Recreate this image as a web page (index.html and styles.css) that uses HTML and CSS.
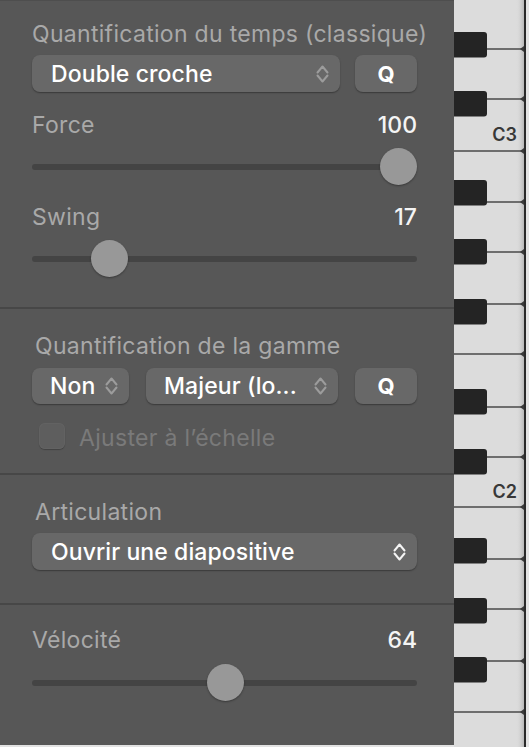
FILE: index.html
```html
<!DOCTYPE html>
<html lang="fr">
<head>
<meta charset="utf-8">
<title>Quantification</title>
<link rel="stylesheet" href="styles.css">
</head>
<body>
<div class="app">
  <div class="panel">
    <section class="section s1">
      <div class="title">Quantification du temps (classique)</div>
      <div class="row controls">
        <div class="popup grow">
          <span class="popup-text">Double croche</span>
          <svg class="chev" width="13" height="20" viewBox="0 0 13 20"><path d="M1.5 8.5 L6.5 2.5 L11.5 8.5 M1.5 11.5 L6.5 17.5 L11.5 11.5"/></svg>
        </div>
        <div class="btn">Q</div>
      </div>
      <div class="row label-row first-label">
        <span class="label">Force</span><span class="value">100</span>
      </div>
      <div class="slider"><div class="track"></div><div class="knob" style="left: calc((100% - 37px) * 1)"></div></div>
      <div class="row label-row">
        <span class="label">Swing</span><span class="value">17</span>
      </div>
      <div class="slider"><div class="track"></div><div class="knob" style="left: calc((100% - 37px) * 0.17)"></div></div>
    </section>
    <section class="section s2">
      <div class="title">Quantification de la gamme</div>
      <div class="row controls">
        <div class="popup small">
          <span class="popup-text">Non</span>
          <svg class="chev" width="13" height="20" viewBox="0 0 13 20"><path d="M1.5 8.5 L6.5 2.5 L11.5 8.5 M1.5 11.5 L6.5 17.5 L11.5 11.5"/></svg>
        </div>
        <div class="popup grow">
          <span class="popup-text">Majeur (lo...</span>
          <svg class="chev" width="13" height="20" viewBox="0 0 13 20"><path d="M1.5 8.5 L6.5 2.5 L11.5 8.5 M1.5 11.5 L6.5 17.5 L11.5 11.5"/></svg>
        </div>
        <div class="btn">Q</div>
      </div>
      <div class="row check-row">
        <div class="checkbox"></div>
        <span class="check-label">Ajuster à l’échelle</span>
      </div>
    </section>
    <section class="section s3">
      <div class="title">Articulation</div>
      <div class="row controls">
        <div class="popup grow">
          <span class="popup-text">Ouvrir une diapositive</span>
          <svg class="chev bright" width="13" height="20" viewBox="0 0 13 20"><path d="M1.5 8.5 L6.5 2.5 L11.5 8.5 M1.5 11.5 L6.5 17.5 L11.5 11.5"/></svg>
        </div>
      </div>
    </section>
    <section class="section s4">
      <div class="row label-row">
        <span class="label">Vélocité</span><span class="value">64</span>
      </div>
      <div class="slider"><div class="track"></div><div class="knob" style="left: calc((100% - 37px) * 0.504)"></div></div>
    </section>
  </div>
  <div class="keyboard">
    <svg width="75" height="747" viewBox="0 0 75 747">
      <defs>
        <linearGradient id="edge" x1="0" x2="1" y1="0" y2="0">
          <stop offset="0" stop-color="#dcdcdc" stop-opacity="0"/>
          <stop offset="1" stop-color="#b8b8b8"/>
        </linearGradient>
      </defs>
      <rect x="0" y="0" width="75" height="747" fill="#dcdcdc"/>
      <rect x="62" y="0" width="8" height="747" fill="url(#edge)"/>
      <g stroke="#4a4a4a" stroke-width="1.6">
        <line x1="33" y1="49" x2="70" y2="49"/>
        <line x1="33" y1="99" x2="70" y2="99"/>
        <line x1="0" y1="151" x2="70" y2="151"/>
        <line x1="33" y1="202" x2="70" y2="202"/>
        <line x1="33" y1="252" x2="70" y2="252"/>
        <line x1="33" y1="304" x2="70" y2="304"/>
        <line x1="0" y1="354" x2="70" y2="354"/>
        <line x1="33" y1="407" x2="70" y2="407"/>
        <line x1="33" y1="457" x2="70" y2="457"/>
        <line x1="0" y1="507" x2="70" y2="507"/>
        <line x1="33" y1="559" x2="70" y2="559"/>
        <line x1="33" y1="609" x2="70" y2="609"/>
        <line x1="33" y1="661" x2="70" y2="661"/>
        <line x1="0" y1="712" x2="70" y2="712"/>
      </g>
      <g fill="#3a3a3a">
        <path d="M66 49 L70 46 L70 52 Z"/>
        <path d="M66 99 L70 96 L70 102 Z"/>
        <path d="M66 151 L70 148 L70 154 Z"/>
        <path d="M66 202 L70 199 L70 205 Z"/>
        <path d="M66 252 L70 249 L70 255 Z"/>
        <path d="M66 304 L70 301 L70 307 Z"/>
        <path d="M66 354 L70 351 L70 357 Z"/>
        <path d="M66 407 L70 404 L70 410 Z"/>
        <path d="M66 457 L70 454 L70 460 Z"/>
        <path d="M66 507 L70 504 L70 510 Z"/>
        <path d="M66 559 L70 556 L70 562 Z"/>
        <path d="M66 609 L70 606 L70 612 Z"/>
        <path d="M66 661 L70 658 L70 664 Z"/>
        <path d="M66 712 L70 709 L70 715 Z"/>
      </g>
      <g fill="#242424">
        <rect x="-4" y="32" width="37" height="25.5" rx="3"/>
        <rect x="-4" y="91" width="37" height="25.5" rx="3"/>
        <rect x="-4" y="180" width="37" height="25.5" rx="3"/>
        <rect x="-4" y="239" width="37" height="25.5" rx="3"/>
        <rect x="-4" y="299" width="37" height="25.5" rx="3"/>
        <rect x="-4" y="389" width="37" height="25.5" rx="3"/>
        <rect x="-4" y="449" width="37" height="25.5" rx="3"/>
        <rect x="-4" y="538" width="37" height="25.5" rx="3"/>
        <rect x="-4" y="598" width="37" height="25.5" rx="3"/>
        <rect x="-4" y="657" width="37" height="25.5" rx="3"/>
      </g>
      <rect x="70" y="0" width="2" height="747" fill="#2a2a2a"/>
      <rect x="72" y="0" width="3" height="747" fill="#e4e4e4"/>
      <text class="key-label" x="63" y="141" text-anchor="end">C3</text>
      <text class="key-label" x="63" y="498" text-anchor="end">C2</text>
    </svg>
  </div>
</div>
<div class="bottom-line"></div>
</body>
</html>
```
FILE: styles.css
```css
html, body {
  margin: 0;
  padding: 0;
  background: #575757;
  overflow: hidden;
}
body {
  width: 529px;
  height: 747px;
  position: relative;
  font-family: "Inter", "Noto Sans", sans-serif;
}
.app {
  display: flex;
  height: 745px;
}
.panel {
  width: 454px;
  flex: none;
  display: flex;
  flex-direction: column;
  border-top: 1px solid #4e4e4e;
  box-sizing: border-box;
}
.keyboard {
  width: 75px;
  flex: none;
  line-height: 0;
}
.bottom-line {
  height: 2px;
  background: #e2e2e2;
}
.section {
  padding: 0 37px 0 32px;
  display: flex;
  flex-direction: column;
  border-bottom: 2px solid #474747;
  box-sizing: border-box;
}
.s1 { padding-top: 20px; height: 308px; }
.s2 { padding-top: 24px; height: 166px; }
.s3 { padding-top: 24px; height: 130px; }
.s4 { padding-top: 22px; border-bottom: none; flex: 1; }
.title {
  font-size: 23px;
  line-height: 26px;
  letter-spacing: 0.3px;
  color: #a9a9a9;
  white-space: nowrap;
}
.s2 .title, .s3 .title { padding-left: 3px; }
.row {
  display: flex;
  align-items: center;
}
.controls {
  margin-top: 8px;
  gap: 15px;
}
.s2 .controls { margin-top: 9px; gap: 17px; }
.popup {
  height: 37px;
  border-radius: 8px;
  background: #686868;
  box-shadow: 0 1px 1.5px rgba(0,0,0,0.35);
  display: flex;
  align-items: center;
  padding: 0 11px 0 19px;
  box-sizing: border-box;
  color: #ffffff;
}
.s2 .popup { height: 36px; padding-left: 18px; }
.popup.grow { flex: 1; }
.popup.small { width: 97px; flex: none; }
.s2 .popup.grow { flex: none; width: 192px; }
.popup-text {
  flex: 1;
  font-size: 23px;
  font-weight: 500;
  letter-spacing: 0.1px;
  white-space: nowrap;
}
.chev {
  flex: none;
}
.chev path {
  fill: none;
  stroke: #9c9c9c;
  stroke-width: 2;
  stroke-linecap: round;
  stroke-linejoin: round;
}
.chev.bright path { stroke: #f4f4f4; }
.btn {
  width: 62px;
  height: 37px;
  flex: none;
  border-radius: 8px;
  background: #686868;
  box-shadow: 0 1px 1.5px rgba(0,0,0,0.35);
  display: flex;
  align-items: center;
  justify-content: center;
  color: #ffffff;
  font-size: 22px;
  font-weight: 700;
}
.s2 .btn { height: 36px; }
.label-row {
  justify-content: space-between;
  line-height: 26px;
  margin-top: 19px;
}
.first-label { margin-top: 20px; }
.s4 .label-row { margin-top: 0; }
.label {
  font-size: 23px;
  letter-spacing: 0.3px;
  color: #a9a9a9;
}
.value {
  font-size: 23px;
  font-weight: 500;
  color: #f4f4f4;
}
.slider {
  position: relative;
  height: 37px;
  margin-top: 10px;
  display: flex;
  align-items: center;
}
.s4 .slider { margin-top: 11px; }
.track {
  width: 100%;
  height: 6px;
  border-radius: 3px;
  background: #444444;
}
.knob {
  position: absolute;
  top: 0;
  width: 37px;
  height: 37px;
  border-radius: 50%;
  background: #989898;
  box-shadow: 0 1px 2px rgba(0,0,0,0.35);
}
.check-row {
  margin-top: 19px;
  padding-left: 7px;
  gap: 14px;
  align-items: flex-start;
}
.checkbox {
  width: 26px;
  height: 26px;
  border-radius: 6px;
  background: #5e5e5e;
  box-shadow: inset 0 0 0 1px #626262, 0 1px 1px rgba(0,0,0,0.25);
}
.check-label {
  font-size: 23px;
  letter-spacing: 0.3px;
  color: #7a7a7a;
  line-height: 26px;
  margin-top: 2px;
}
.key-label {
  font-family: "Inter", "Noto Sans", sans-serif;
  font-size: 18px;
  font-weight: 600;
  fill: #383838;
}
```
